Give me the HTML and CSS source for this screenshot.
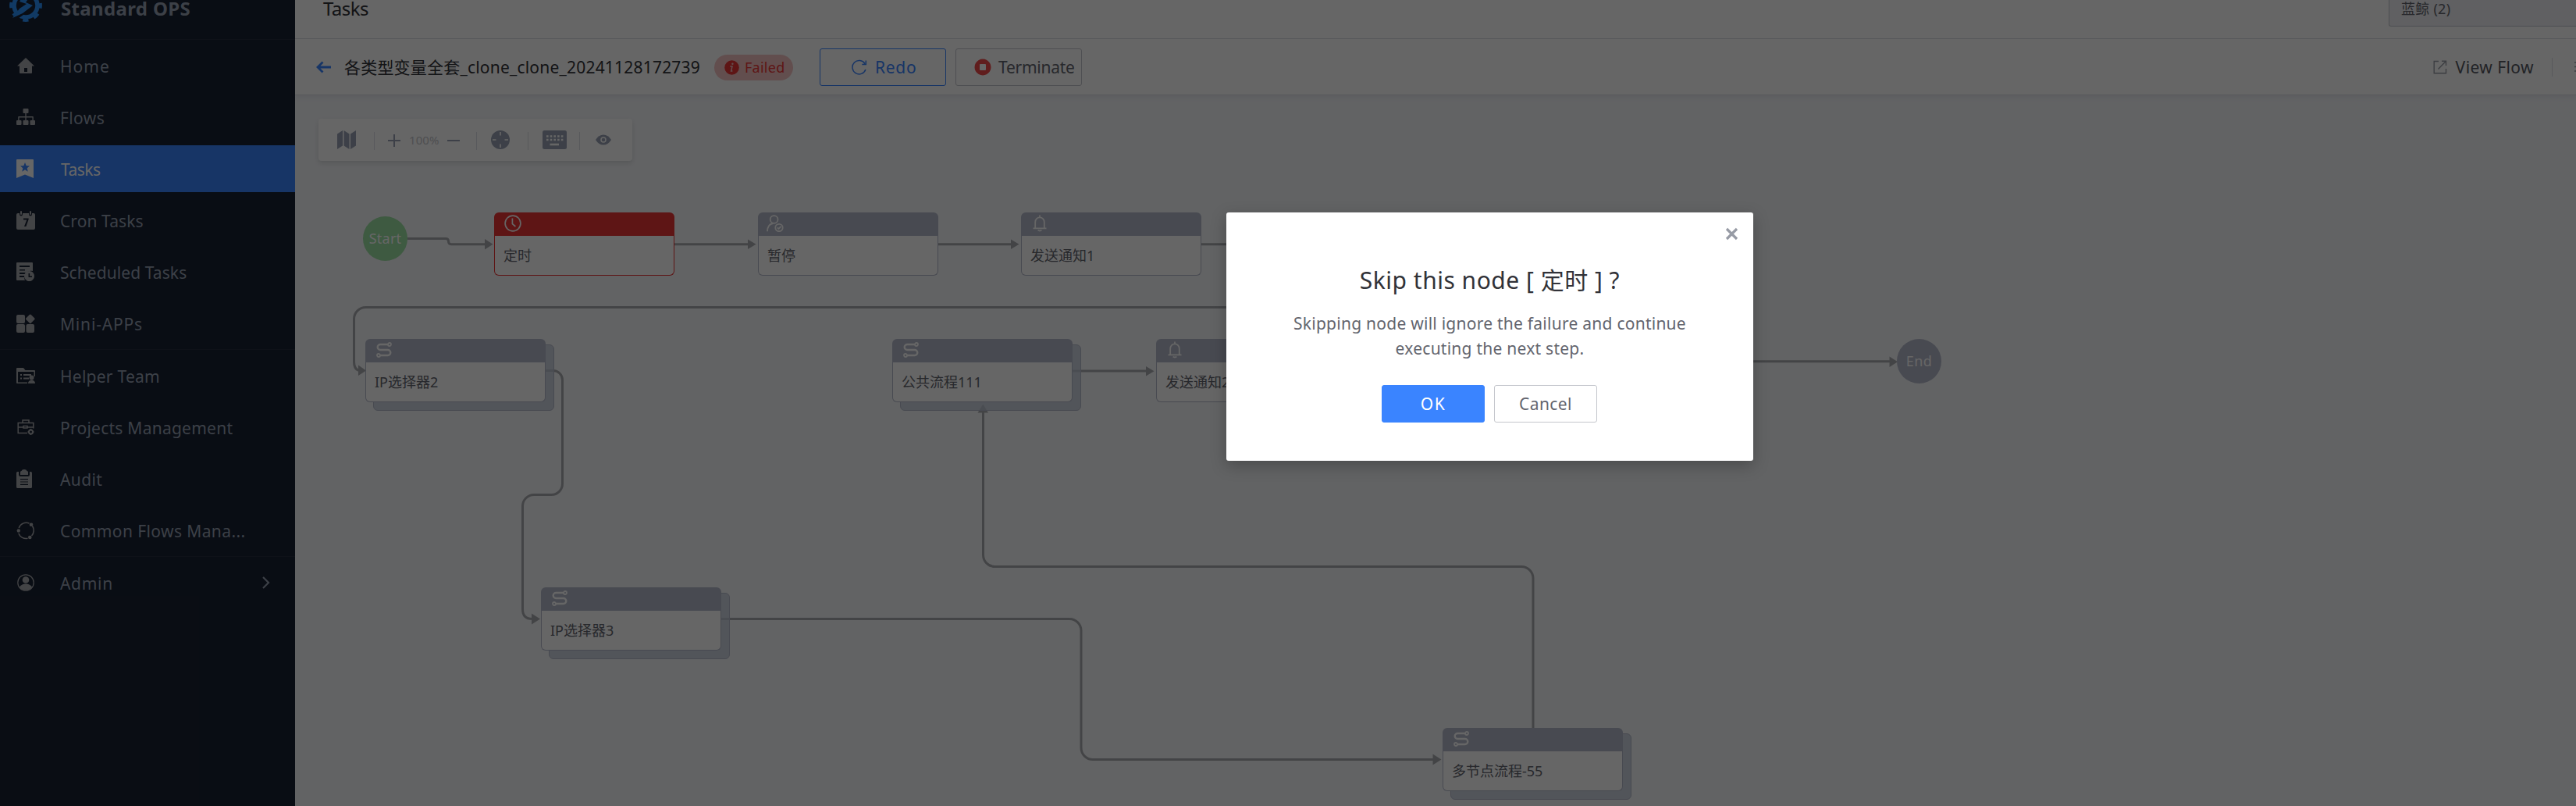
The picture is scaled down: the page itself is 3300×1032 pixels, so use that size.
FILE: index.html
```html
<!DOCTYPE html>
<html lang="en">
<head>
<meta charset="utf-8">
<title>Standard OPS - Tasks</title>
<link rel="stylesheet" href="styles.css">
</head>
<body>
<svg class="defs" width="0" height="0">
  <symbol id="i-flow" viewBox="0 0 20 20"><g fill="none" stroke="#fff"><path stroke-width="2.4" d="M15 3H5.200a3.500 3.500 0 0 0 0 7h9.600a3.500 3.500 0 0 1 0 7H5"/><circle cx="17" cy="3" r="2" stroke-width="1.800"/><circle cx="3" cy="17" r="2" stroke-width="1.800"/></g></symbol>
  <symbol id="i-bell" viewBox="0 0 18 22"><g fill="none" stroke="#fff" stroke-width="1.8"><path d="M3.2 17V9.4a5.8 6 0 0 1 11.6 0V17M.5 17.4h17M9 3.4V.6"/><path d="M6.6 19.6q2.4 1.8 4.8 0"/></g></symbol>
  <symbol id="i-clock" viewBox="0 0 22 22"><g fill="none" stroke="#fff" stroke-width="1.7"><circle cx="11" cy="11" r="9.9"/><path d="M10.4 4.6v7l4 3.4"/></g></symbol>
  <symbol id="i-user" viewBox="0 0 22 22"><g fill="none" stroke="#fff" stroke-width="1.8"><circle cx="9.6" cy="6" r="4.9"/><path d="M1 21.2c.2-5.600 3-9.600 7.400-10.200"/><circle cx="16" cy="16.500" r="4.700"/><path d="M13.800 16.300l1.700 1.700 3-3"/></g></symbol>
</svg>
<div class="app">
  <aside class="sidebar">
    <div class="brand">
      <svg class="logo" width="42" height="42" viewBox="0 0 42 42"><circle cx="21" cy="21" r="15" fill="none" stroke="#2b91fb" stroke-width="5.500"/><circle cx="21" cy="21" r="18.600" fill="none" stroke="#2b91fb" stroke-width="4.600" stroke-dasharray="7.300 7.300" stroke-dashoffset="3.650"/><path fill="#182132" d="M0 40l14-13 4 6-10 7z"/><path fill="#2b91fb" d="M18 7l-5 9 9 3-9 6L4 37l13-6 13-10-9-4 5-7z"/></svg>
      <span>Standard OPS</span>
    </div>
    <nav class="menu">
      <div class="item"><svg class="ico" viewBox="0 0 24 24"><path d="M12 2l11 10.500h-3V21q0 1-1 1H5q-1 0-1-1v-8.500H1zM10 15v5h4v-5z" fill-rule="evenodd"/></svg><span class="wide">Home</span></div>
      <div class="item"><svg class="ico" viewBox="0 0 24 24"><path d="M9.500 1h5q1 0 1 1v4q0 1-1 1H12.700v4H21q.800 0 .800.800V16H23q1 0 1 1v4q0 1-1 1h-4.500q-1 0-1-1v-4q0-1 1-1h1.900v-3.600h-7.700V16h1.800q1 0 1 1v4q0 1-1 1h-5q-1 0-1-1v-4q0-1 1-1h1.800v-3.600H3.600V16h1.900q1 0 1 1v4q0 1-1 1H1q-1 0-1-1v-4q0-1 1-1h1.200v-4.200q0-.800.800-.800h8.300V7H9.500q-1 0-1-1V2q0-1 1-1z"/></svg><span class="mid">Flows</span></div>
      <div class="item active"><svg class="ico" viewBox="0 0 24 24"><path d="M1 0h20q1 0 1 1v23l-11-4.500L0 24V1q0-1 1-1zM11 4L9.300 8.200 5 8.500l3.300 2.800-1 4.400L11 13.300l3.700 2.400-1-4.400L17 8.500l-4.300-.3z" fill-rule="evenodd"/></svg><span class="tight">Tasks</span></div>
      <div class="item"><svg class="ico" viewBox="0 0 24 24"><path d="M2 3h2v1q0 2.500 2 2.500T8 4V3h8v1q0 2.500 2 2.500T20 4V3h2q2 0 2 2v17q0 2-2 2H2q-2 0-2-2V5q0-2 2-2zM9 9.500v2h4.300L10 20h2.400L15.600 11V9.500z" fill-rule="evenodd"/><rect x="5" width="2" height="5" rx="1"/><rect x="17" width="2" height="5" rx="1"/></svg><span class="snug">Cron Tasks</span></div>
      <div class="item"><svg class="ico" viewBox="0 0 24 24"><path d="M1 0h19q1 0 1 1v10q-5-1-8 2H4v2h7.500l-1 2H4v2h6q0 3 1.500 4H1q-1 0-1-1V1q0-1 1-1zM4 4v2h13V4zm0 5v1.500h7V9z" fill-rule="evenodd"/><path d="M16.500 11a6.500 6.500 0 1 0 .01 0zM15.500 14h1.600v3.500H20V19h-4.500z" fill-rule="evenodd"/></svg><span class="snug">Scheduled Tasks</span></div>
      <div class="item"><svg class="ico" viewBox="0 0 24 24"><rect y="1" width="11" height="11" rx="2"/><rect y="13" width="11" height="11" rx="2"/><rect x="12.500" y="13" width="10.500" height="11" rx="2"/><rect x="13.300" y="1.800" width="9" height="9" rx="1.500" transform="rotate(45 17.800 6.300)"/></svg><span class="mini">Mini-APPs</span></div>
      <hr class="rule">
      <div class="item"><svg class="ico" viewBox="0 0 24 24"><path d="M1 2h8l2.500 3H23q1 0 1 1v7h-1.500V7H2v13.500h12V22H1q-1 0-1-1V3q0-1 1-1z"/><path d="M5 10h2v2H5zm4 0h10v2H9zm-4 4.500h2v2H5zm4 0h7v2H9z"/><circle cx="19.500" cy="14.500" r="3"/><path d="M15 22q0-4 4.500-4.500Q24 18 24 22z"/></svg><span>Helper Team</span></div>
      <div class="item"><svg class="ico" viewBox="0 0 24 24"><g fill="none" stroke="currentColor" stroke-width="1.500"><path d="M14 19.500H2.200V6.500h19.600v7M2 12h6.500m5.500 0h8M8 6V3h8v3M9 10.500h5V13H9z"/><circle cx="18.500" cy="18" r="2.500" stroke-width="2"/><path d="M18.500 14v2m0 4v2m-4-4h2m4 0h2" /></g></svg><span>Projects Management</span></div>
      <div class="item"><svg class="ico" viewBox="0 0 24 24"><path d="M1.500 3H3v4q0 2 2 2h10q2 0 2-2V3h1.500Q20 3 20 4.500v18q0 1.500-1.500 1.500h-17Q0 24 0 22.500v-18Q0 3 1.500 3zM5 12v1.200h10V12zm0 3.400v1.200h10v-1.200zm0 3.300v1.200h10v-1.200z" fill-rule="evenodd"/><path d="M6.500 2Q7 0 10 0t3.500 2Q15 2 15 3.500V7H5V3.500Q5 2 6.500 2z"/></svg><span class="mid">Audit</span></div>
      <div class="item"><svg class="ico" viewBox="0 0 24 24"><g fill="none" stroke="currentColor" stroke-width="1.500"><path d="M3.200 9A10 10 0 0 1 16.500 3M20.500 6.500a10 10 0 0 1-1 12.500M14.500 22.300A10.300 10.300 0 0 1 2.800 16"/></g><circle cx="19" cy="4.800" r="2.300"/><circle cx="2.800" cy="12.500" r="2.200"/><circle cx="17.300" cy="21" r="2.300"/></svg><span class="mid">Common Flows Mana...</span></div>
      <hr class="rule">
      <div class="item"><svg class="ico" viewBox="0 0 24 24"><circle cx="12" cy="12" r="10.200" fill="none" stroke="currentColor" stroke-width="1.200"/><circle cx="12" cy="8.500" r="4.300"/><path d="M4 17.500q3-4 8-4t8 4q-3 4.300-8 4.300t-8-4.300z"/></svg><span class="big">Admin</span><svg class="chev" width="12" height="18" viewBox="0 0 12 18"><path d="M2 2l7 7-7 7" fill="none" stroke="currentColor" stroke-width="2.200"/></svg></div>
    </nav>
  </aside>
  <main class="main">
    <header class="topbar"><h1>Tasks</h1><div class="project">蓝鲸 (2)</div></header>
    <section class="taskbar">
      <svg class="back" width="20" height="16" viewBox="0 0 20 16"><path d="M8.500 1.500L2 8l6.500 6.500M2 8h17" fill="none" stroke="#3a84ff" stroke-width="2.800"/></svg>
      <h2>各类型变量全套_clone_clone_20241128172739</h2>
      <div class="status"><svg width="19" height="19" viewBox="0 0 19 19"><circle cx="9.500" cy="9.500" r="9.300" fill="#ea3636"/><path d="M7.300 8h2.700l-1.400 6h1.800" fill="none" stroke="#f5c3c3" stroke-width="1.500"/><circle cx="10.400" cy="4.800" r="1.200" fill="#f5c3c3"/></svg><span>Failed</span></div>
      <button class="btn redo"><svg width="20" height="20" viewBox="0 0 20 20"><path d="M17.900 13A8.700 8.700 0 1 1 17 5.500M18.300 1.500v5h-5" fill="none" stroke="#3a84ff" stroke-width="1.500"/></svg><span>Redo</span></button>
      <button class="btn terminate"><svg width="22" height="22" viewBox="0 0 22 22"><path fill="#f04a4a" fill-rule="evenodd" d="M11 .5a10.500 10.500 0 1 0 .01 0zM8 7h6q1 0 1 1v6q0 1-1 1H8q-1 0-1-1V8q0-1 1-1z"/></svg><span>Terminate</span></button>
      <a class="view"><svg width="18" height="18" viewBox="0 0 18 18"><path d="M7 1.500H1.200v15.300h15.300V11M11 1.200h5.500V7M16.500 1.200L6.500 11.500" fill="none" stroke="#979ba5" stroke-width="1.400"/></svg><span>View Flow</span></a>
      <i class="sep"></i>
      <svg class="more" width="3" height="14" viewBox="0 0 3 14"><path d="M1 1h2M1 6.500h2M1 12h2" stroke="#979ba5" stroke-width="1.500"/></svg>
    </section>
    <section class="canvas">
      <div class="tools">
        <svg class="map" width="24" height="24" viewBox="0 0 24 24"><path d="M0 4.500L7 0v19.500L0 24zM8.500 0l7 4.500V24l-7-4.500zM17 4.500L24 0v19.500L17 24z"/></svg>
        <i class="line"></i>
        <svg class="plus" width="16" height="16" viewBox="0 0 16 16"><path d="M7 0h2v7h7v2H9v7H7V9H0V7h7z"/></svg>
        <span class="pct">100%</span>
        <svg class="minus" width="16" height="16" viewBox="0 0 16 16"><path d="M0 7h16v2H0z"/></svg>
        <i class="line"></i>
        <svg class="aim" width="24" height="24" viewBox="0 0 24 24"><circle cx="12" cy="12" r="12"/><path d="M12 2v4.500M12 17.500V22M2 12h4.500M17.500 12H22" stroke="#fff" stroke-width="1.600"/></svg>
        <i class="line"></i>
        <svg class="keys" width="31" height="24" viewBox="0 0 31 24"><rect width="31" height="24" rx="2.500"/><path d="M5 7.500h22M5 12h22" stroke="#fff" stroke-width="2.600" stroke-dasharray="2.600 2.100"/><path d="M9.500 18h11.500" stroke="#fff" stroke-width="2.600"/></svg>
        <i class="line"></i>
        <svg class="eye" width="20" height="14" viewBox="0 0 20 14"><path d="M0 7q4-6.600 10-6.600T20 7q-4 6.600-10 6.600T0 7z"/><circle cx="10" cy="7" r="3" fill="none" stroke="#fff" stroke-width="1.500"/></svg>
      </div>
      <svg class="edges" viewBox="378 122 2922 910">
        <g fill="none" stroke="#a9abaf" stroke-width="3">
          <path d="M522 305.500H571q3.500 0 3.500 3.500t3.500 3.800H622"/>
          <path d="M864 312.800H960M1202 312.800H1297M1539 312.800H1660"/>
          <path d="M1660 393.500H468.500a15 15 0 0 0-15 15V463q0 11 8 11.600"/>
          <path d="M699 474.500h9.500a12 12 0 0 1 12 12V619.500a14 14 0 0 1-14 14H684a14.500 14.500 0 0 0-14.500 14.500V780q0 12.500 12.500 12.500"/>
          <path d="M924 792.500H1370a15 15 0 0 1 15 15V957.500a15 15 0 0 0 15 15H1837"/>
          <path d="M1964 932V740.500a15 15 0 0 0-15-15H1274.500a15 15 0 0 1-15-15V527"/>
          <path d="M1374 475H1469M2200 462.800H2422"/>
        </g>
        <path fill="#a9abaf" d="M621 306v13.500l10.500-6.700zM958 306.500v12.500l10.500-6.200zM1295 306.500v12.500l10.500-6.200zM459 467.500v13.500l10-6.500zM681 785.500v14l11-7zM1835.500 965.500v14l11-7zM1468 469v12.500l10.500-6.200zM2420.500 456.500v13.500l10.500-6.700zM1252.500 528.500h13.500l-6.700-11z"/>
      </svg>
      <div class="dot start">Start</div>
      <div class="dot end">End</div>
      <div class="node n1 failed"><div class="head"><svg width="22" height="22"><use href="#i-clock"/></svg></div><div class="name">定时</div></div>
      <div class="node n2"><div class="head user"><svg width="22" height="22"><use href="#i-user"/></svg></div><div class="name">暂停</div></div>
      <div class="node n3"><div class="head bell"><svg width="18" height="22"><use href="#i-bell"/></svg></div><div class="name">发送通知1</div></div>
      <div class="node sub n4"><div class="head flow"><svg width="20" height="20"><use href="#i-flow"/></svg></div><div class="name">IP选择器2</div></div>
      <div class="node sub n5"><div class="head flow"><svg width="20" height="20"><use href="#i-flow"/></svg></div><div class="name">公共流程111</div></div>
      <div class="node n6"><div class="head bell"><svg width="18" height="22"><use href="#i-bell"/></svg></div><div class="name">发送通知2</div></div>
      <div class="node sub n7"><div class="head flow"><svg width="20" height="20"><use href="#i-flow"/></svg></div><div class="name">IP选择器3</div></div>
      <div class="node sub n8"><div class="head flow"><svg width="20" height="20"><use href="#i-flow"/></svg></div><div class="name">多节点流程-55</div></div>
    </section>
  </main>
</div>
<div class="mask">
  <div class="dialog">
    <svg class="close" width="17" height="17" viewBox="0 0 17 17"><path d="M2 2l13 13M15 2L2 15" stroke="#979ba5" stroke-width="3.200"/></svg>
    <h3>Skip this node [ 定时 ] ?</h3>
    <p>Skipping node will ignore the failure and continue<br>executing the next step.</p>
    <div class="actions"><button class="ok">OK</button><button class="cancel">Cancel</button></div>
  </div>
</div>
</body>
</html>
```
FILE: styles.css
```css
* { box-sizing: border-box; }
body {
  margin: 0;
  width: 3300px;
  height: 1032px;
  overflow: hidden;
  font: 21px/30px "Noto Sans", "Noto Sans CJK SC", sans-serif;
  letter-spacing: .25px;
  color: #63656e;
}
h1, h2, h3, p { margin: 0; font-weight: 400; }
button { font: inherit; letter-spacing: inherit; color: inherit; padding: 0; background: #fff; }
.defs { position: absolute; }
.app { display: flex; height: 1032px; }

/* Sidebar */
.sidebar { width: 378px; flex: none; background: #182132; color: #96a0b2; }
.brand {
  height: 51px;
  display: flex;
  align-items: flex-start;
  gap: 24px;
  padding-left: 12px;
  border-bottom: 1px solid #242c3c;
  overflow: hidden;
  font-size: 24px;
  line-height: 22px;
  font-weight: 700;
  letter-spacing: .35px;
}
.logo { flex: none; margin-top: -14px; }
.menu { display: flex; flex-direction: column; gap: 6px; padding-top: 3px; }
.item { height: 60px; display: flex; align-items: center; padding: 0 31px 0 21px; }
.item span { margin: 1px 0 0 32px; white-space: nowrap; flex: 1; }
.ico { width: 24px; height: 24px; flex: none; fill: currentColor; color: #a9abb0; }
.item.active { background: #3a84ff; color: #fff; }
.active .ico { color: #fff; }
.rule { width: 100%; height: 1px; margin: -3px 0; border: 0; background: #242c3c; }
.item .wide { letter-spacing: 1px; }
.mid { letter-spacing: .4px; }
.big { letter-spacing: .7px; }
.item .tight { letter-spacing: -.5px; margin-left: 33px; }
.snug { letter-spacing: .08px; }
.mini { letter-spacing: .82px; }

/* Header bars */
.main { flex: 1; min-width: 0; display: flex; flex-direction: column; }
.topbar {
  height: 50px;
  background: #fff;
  border-bottom: 1px solid #dcdee5;
  display: flex;
  justify-content: space-between;
  align-items: flex-start;
  padding-left: 36px;
  overflow: hidden;
}
.topbar h1 { font-size: 24px; line-height: 22px; letter-spacing: -.55px; color: #313238; }
.project {
  width: 240px;
  height: 34px;
  padding-left: 15px;
  line-height: 22px;
  background: #f0f1f5;
  border: 1px solid #c4c6cc;
  border-width: 0 0 1px 1px;
  border-radius: 0 0 0 3px;
  font-size: 18px;
}
.taskbar {
  height: 72px;
  flex: none;
  display: flex;
  align-items: center;
  padding: 0 0 0 27px;
  background: #fff;
  border-bottom: 1px solid #dcdee5;
  box-shadow: 0 3px 6px rgba(60, 60, 120, .07);
  position: relative;
  z-index: 1;
}
.taskbar h2 { margin: 1px 0 0 16px; width: 458px; font-size: 21px; letter-spacing: .2px; color: #313238; white-space: nowrap; }
.status {
  width: 101px;
  height: 33px;
  margin: 1px 0 0 16px;
  padding-left: 13px;
  display: flex;
  align-items: center;
  gap: 7px;
  border-radius: 17px;
  background: #f5c3c3;
  color: #ea3636;
  font-size: 18px;
}
.btn { width: 162px; height: 48px; margin-top: 1px; display: flex; align-items: center; border: 1px solid #c4c6cc; border-radius: 3px; }
.redo { margin-left: 34px; padding-left: 40px; gap: 10px; border-color: #3a84ff; color: #3a84ff; letter-spacing: .7px; }
.terminate { margin-left: 12px; padding-left: 23px; gap: 9px; letter-spacing: -.25px; }
.view { margin-left: auto; margin-right: 23px; display: flex; align-items: center; gap: 11px; letter-spacing: .43px; color: #55575f; }
.sep { width: 1px; height: 24px; margin-right: 27px; background: #dcdee5; }

/* Flow canvas */
.canvas { position: relative; flex: 1; background: #f5f7fa; overflow: hidden; }
.tools {
  width: 402px;
  height: 54px;
  margin: 30px 0 0 30px;
  padding-left: 24px;
  display: flex;
  align-items: center;
  background: #fff;
  border-radius: 4px;
  box-shadow: 0 3px 6px rgba(0, 0, 0, .12);
  fill: #98a1b3;
}
.line { width: 1px; height: 23px; margin-top: 2px; background: #dcdee5; }
.map { margin-right: 23px; }
.plus { margin: 2px 11px 0 17px; }
.pct { width: 37px; font-size: 15px; letter-spacing: .1px; color: #c4c6cc; }
.minus { margin: 2px 21px 0 12px; }
.aim { margin: 0 23px 0 18px; }
.keys { margin: 0 16px 0 18px; }
.eye { margin-left: 20px; }
.edges { position: absolute; left: 0; top: 0; width: 2922px; height: 910px; }
.dot {
  position: absolute;
  width: 57px;
  height: 57px;
  border-radius: 50%;
  color: #fff;
  font-size: 18px;
  line-height: 57px;
  text-align: center;
}
.start { left: 87px; top: 155px; background: #9be0a2; }
.end { left: 2052px; top: 312px; background: #b4b9cb; letter-spacing: .4px; }
.node { position: absolute; width: 231px; height: 81px; font-size: 18px; }
.head { height: 30px; display: flex; align-items: center; padding: 0 0 2px 13px; background: #b4b9cb; border-radius: 6px 6px 0 0; }
.head.user { padding-left: 11px; }
.head.bell { padding-left: 15px; }
.head.flow { padding-left: 14px; }
.name {
  height: 51px;
  padding: 0 11px;
  line-height: 50px;
  background: #fff;
  border: 1px solid #b4b9cb;
  border-top: 0;
  border-radius: 0 0 6px 6px;
  letter-spacing: 0;
}
.head, .name { position: relative; }
.sub::before {
  content: "";
  position: absolute;
  left: 10px;
  top: 7px;
  width: 230px;
  height: 83px;
  border: 1px solid #b4b9cb;
  border-radius: 6px;
  background: rgba(192, 200, 215, .75);
}
.failed .head { background: #ea3636; }
.failed .name { border-color: #ea3636; }
.n1 { left: 255px; top: 150px; }
.n2 { left: 593px; top: 150px; }
.n3 { left: 930px; top: 150px; }
.n4 { left: 90px; top: 312px; }
.n5 { left: 765px; top: 312px; }
.n6 { left: 1103px; top: 312px; }
.n7 { left: 315px; top: 630px; }
.n8 { left: 1470px; top: 810px; }

/* Confirm dialog */
.mask { position: absolute; z-index: 2; left: 0; top: 0; width: 3300px; height: 1032px; background: rgba(0, 0, 0, .6); }
.dialog {
  position: absolute;
  left: 1571px;
  top: 272px;
  width: 675px;
  height: 318px;
  padding-top: 64px;
  background: #fff;
  border-radius: 3px;
  box-shadow: 0 6px 20px rgba(0, 0, 0, .25);
  text-align: center;
}
.close { position: absolute; right: 19px; top: 19px; }
.dialog h3 { font-size: 30px; line-height: 46px; letter-spacing: .5px; color: #313238; }
.dialog p { margin-top: 16px; line-height: 32px; }
.actions { display: flex; justify-content: center; gap: 12px; margin: 31px 1px 0 0; }
.actions button { width: 132px; height: 48px; border-radius: 3px; border: 1px solid #c4c6cc; letter-spacing: .4px; }
.actions .ok { background: #3a84ff; border-color: #3a84ff; color: #fff; letter-spacing: 1.500px; }
```
